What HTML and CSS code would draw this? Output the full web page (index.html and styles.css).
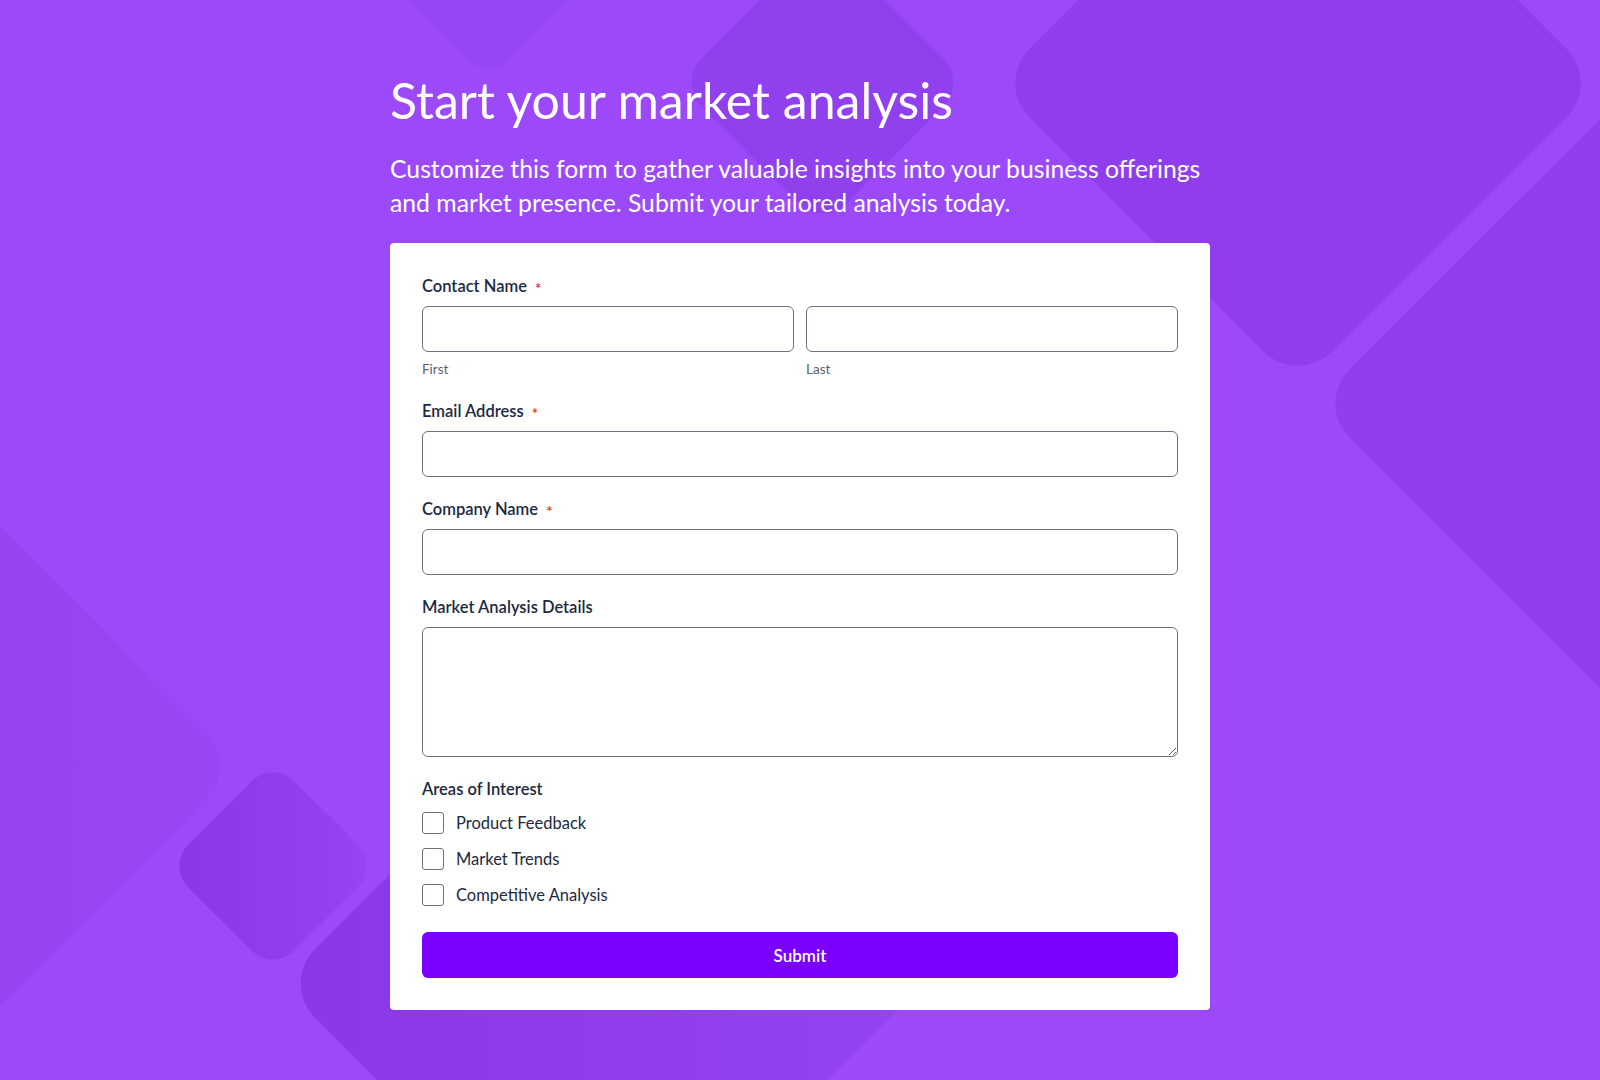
FILE: index.html
```html
<!DOCTYPE html>
<html lang="en">
<head>
<meta charset="utf-8">
<title>Start your market analysis</title>
<link rel="stylesheet" href="styles.css">
</head>
<body>
<div class="bg" aria-hidden="true">
  <div class="shape s1"></div>
  <div class="shape s2"></div>
  <div class="shape s3"></div>
  <div class="shape s4"></div>
  <div class="shape s5"></div>
  <div class="shape s6"></div>
  <div class="shape s7"></div>
</div>
<main class="page">
  <h1 class="title">Start your market analysis</h1>
  <p class="intro">Customize this form to gather valuable insights into your business offerings and market presence. Submit your tailored analysis today.</p>
  <form class="card">
    <div class="field field-name">
      <div class="label">Contact Name <span class="req">*</span></div>
      <div class="name-row">
        <div class="name-col">
          <input class="input" type="text">
          <div class="sub">First</div>
        </div>
        <div class="name-col">
          <input class="input" type="text">
          <div class="sub">Last</div>
        </div>
      </div>
    </div>
    <div class="field">
      <div class="label">Email Address <span class="req">*</span></div>
      <input class="input" type="email">
    </div>
    <div class="field">
      <div class="label">Company Name <span class="req">*</span></div>
      <input class="input" type="text">
    </div>
    <div class="field">
      <div class="label">Market Analysis Details</div>
      <textarea class="input textarea"></textarea>
    </div>
    <div class="field">
      <div class="label">Areas of Interest</div>
      <div class="checks">
        <label class="check"><span class="box"></span>Product Feedback</label>
        <label class="check"><span class="box"></span>Market Trends</label>
        <label class="check"><span class="box"></span>Competitive Analysis</label>
      </div>
    </div>
    <button class="submit" type="button">Submit</button>
  </form>
</main>
</body>
</html>
```
FILE: styles.css
```css
* { box-sizing: border-box; }
html, body {
  margin: 0;
  padding: 0;
}
body {
  background: #9c4af9;
  font-family: Lato, "Noto Sans", sans-serif;
  min-height: 1080px;
  overflow: hidden;
  position: relative;
}
.bg {
  position: absolute;
  inset: 0;
  overflow: hidden;
  z-index: 0;
}
.shape {
  position: absolute;
  background: #8f3ceb;
  border-radius: 48px;
  transform: rotate(45deg);
}
.s1 { left: 1084px; top: -131px; width: 428px; height: 428px; background: #903ded; }
.s2 { left: 1418px; top: 156px; width: 495px; height: 495px; background: #913eee; }
.s3 { left: 720px; top: -20px; width: 205px; height: 205px; border-radius: 34px; background: #9140ee; }
.s4 { left: -411px; top: 496px; width: 540px; height: 540px; background: linear-gradient(45deg, #8e3be9, #9a47f6); }
.s5 { left: 198px; top: 791px; width: 150px; height: 150px; border-radius: 30px; background: linear-gradient(45deg, #8836e6, #9844f4); }
.s6 { left: 375px; top: 756px; width: 455px; height: 455px; background: linear-gradient(45deg, #8a37e7, #9544f2); }
.s7 { left: 412px; top: -107px; width: 155px; height: 155px; border-radius: 26px; background: #9646f4; }

.page {
  position: relative;
  z-index: 1;
  width: 820px;
  margin: 0 auto;
  padding-top: 70px;
}
.title {
  margin: 0;
  color: #ffffff;
  font-weight: 400;
  font-size: 50px;
  line-height: 60px;
  letter-spacing: 0;
}
.intro {
  margin: 22px 0 0;
  color: #ffffff;
  font-size: 24.75px;
  line-height: 34px;
  font-weight: 400;
}
.card {
  margin-top: 23px;
  background: #ffffff;
  border-radius: 4px;
  padding: 32px;
  display: flex;
  flex-direction: column;
  gap: 21px;
}
.field {
  display: flex;
  flex-direction: column;
}
.label {
  color: #1b2a41;
  font-size: 16.5px;
  font-weight: 600;
  line-height: 23px;
  height: 23px;
  margin-bottom: 8px;
}
.req {
  color: #d9302a;
  font-size: 15px;
  line-height: 0;
  margin-left: 4px;
  vertical-align: -2px;
}
.name-row {
  display: flex;
  gap: 12px;
}
.name-col {
  flex: 1;
  display: flex;
  flex-direction: column;
}
.input {
  display: block;
  width: 100%;
  height: 46px;
  border: 1px solid #6a7180;
  border-radius: 6px;
  background: #ffffff;
  font-family: inherit;
  font-size: 16px;
  padding: 0 12px;
  margin: 0;
  outline: none;
}
.textarea {
  height: 130px;
  resize: vertical;
  padding: 10px 12px;
}
.sub {
  color: #5b6370;
  font-size: 13.5px;
  line-height: 18px;
  margin-top: 8px;
  margin-bottom: 1px;
}
.checks {
  display: flex;
  flex-direction: column;
  gap: 14px;
  margin-top: 3px;
}
.check {
  display: flex;
  align-items: center;
  color: #1b2a41;
  font-size: 16.5px;
  line-height: 22px;
}
.box {
  width: 22px;
  height: 22px;
  border: 1px solid #6a7180;
  border-radius: 3px;
  margin-right: 12px;
  background: #fff;
  flex: none;
}
.submit {
  margin-top: 5px;
  height: 46px;
  width: 100%;
  border: none;
  border-radius: 6px;
  background: #7b00ff;
  color: #ffffff;
  font-family: inherit;
  font-size: 17px;
  font-weight: 600;
}
```
